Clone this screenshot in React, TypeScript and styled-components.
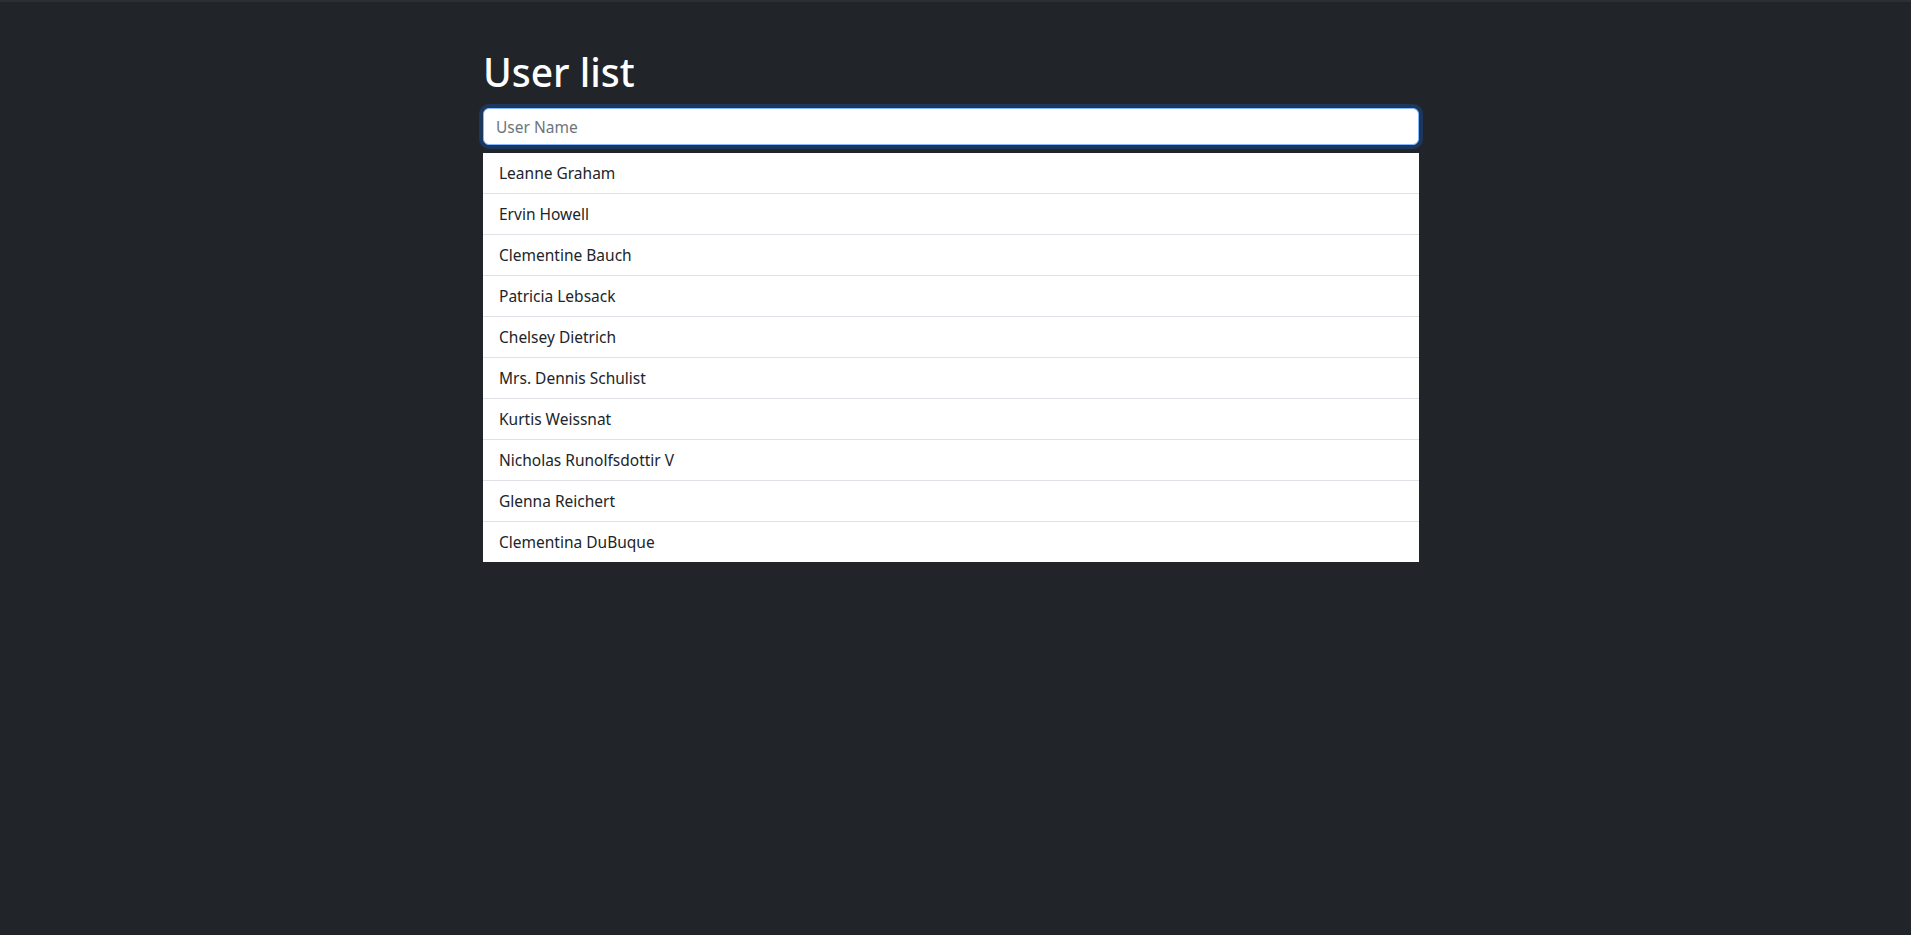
import React from "react";
import styled, { createGlobalStyle } from "styled-components";

const GlobalStyle = createGlobalStyle`
  html, body {
    margin: 0;
    padding: 0;
    background: #212529;
  }
  body {
    font-family: "Noto Sans", "Open Sans", sans-serif;
    border-top: 2px solid #2e2f31;
  }
  * { box-sizing: border-box; }
`;

const Page = styled.div`
  min-height: calc(100vh - 2px);
  padding: 0 9px 0 0;
`;

const Container = styled.main`
  width: 936px;
  margin: 0 auto;
  padding-top: 46px;
`;

const Title = styled.h1`
  margin: 0 0 12px 0;
  font-size: 39px;
  line-height: 48px;
  font-weight: 500;
  color: #ffffff;
`;

const SearchInput = styled.input`
  display: block;
  width: 100%;
  height: 37px;
  padding: 6px 12px;
  font-family: inherit;
  font-size: 15.5px;
  line-height: 24px;
  color: #212529;
  background: #ffffff;
  border: 1px solid #86b7fe;
  border-radius: 6px;
  outline: none;
  box-shadow: 0 0 0 4px rgba(13, 110, 253, 0.25);
  &::placeholder {
    color: #6c757d;
  }
`;

const List = styled.ul`
  list-style: none;
  margin: 8px 0 0 0;
  padding: 0;
  background: #ffffff;
`;

const Item = styled.li`
  padding: 8px 16px;
  font-size: 15.5px;
  line-height: 24px;
  color: #212529;
  border-top: 1px solid #dee2e6;
  &:first-child {
    border-top: none;
  }
`;

const users = [
  "Leanne Graham",
  "Ervin Howell",
  "Clementine Bauch",
  "Patricia Lebsack",
  "Chelsey Dietrich",
  "Mrs. Dennis Schulist",
  "Kurtis Weissnat",
  "Nicholas Runolfsdottir V",
  "Glenna Reichert",
  "Clementina DuBuque",
];

export default function App() {
  return (
    <>
      <GlobalStyle />
      <Page>
        <Container>
          <Title>User list</Title>
          <SearchInput type="text" placeholder="User Name" autoFocus />
          <List>
            {users.map((u) => (
              <Item key={u}>{u}</Item>
            ))}
          </List>
        </Container>
      </Page>
    </>
  );
}
